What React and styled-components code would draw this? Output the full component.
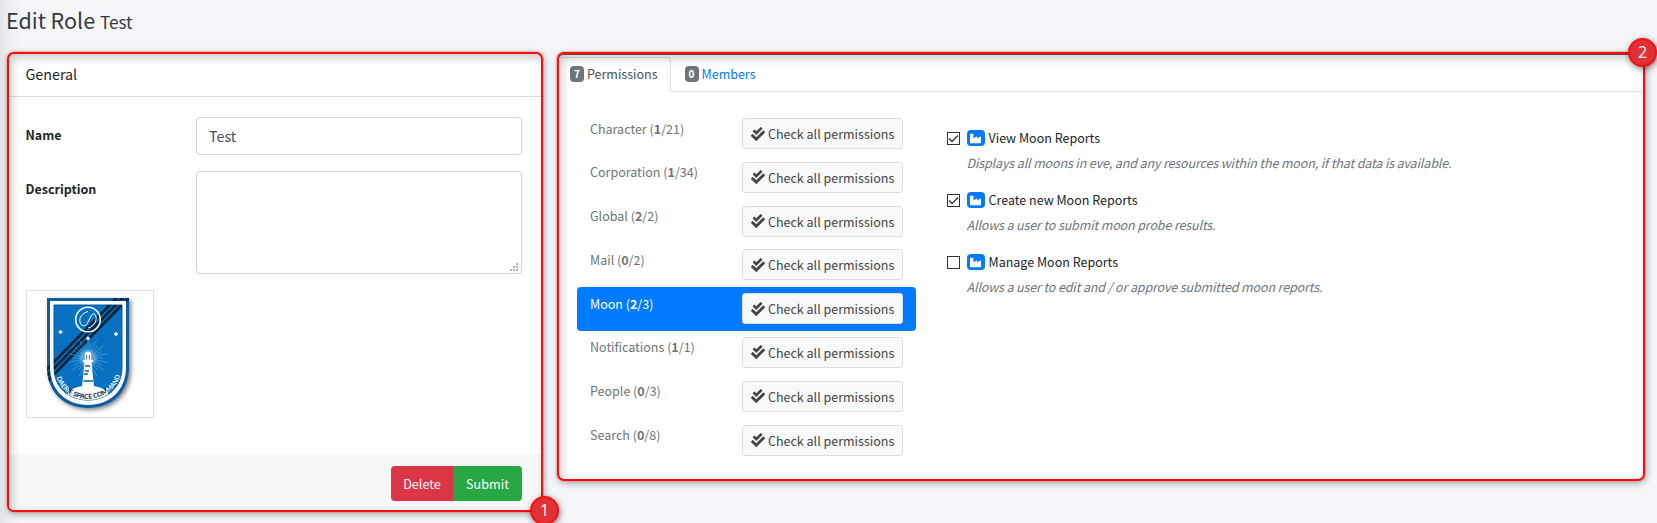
import React from "react";
import styled, { createGlobalStyle, css } from "styled-components";
import { FaCheckDouble, FaIndustry } from "react-icons/fa";

const Global = createGlobalStyle`
  *, *::before, *::after { box-sizing: border-box; }
  body {
    margin: 0;
    background: #f4f6f9;
    color: #212529;
    font-family: "Noto Sans CJK JP", "Open Sans", sans-serif;
    font-size: 12.5px;
    line-height: 20px;
    overflow: hidden;
  }
`;

const Page = styled.main`
  height: 523px;
  padding: 0 12px 0 7px;
  background: linear-gradient(90deg, #e2e4e7 0, #eceef1 8px, #f4f6f9 22px);
`;

const Heading = styled.h1`
  height: 52px;
  margin: 0;
  padding-top: 4px;
  font-size: 21.5px;
  line-height: 32px;
  font-weight: 400;
  color: #343a40;
  white-space: nowrap;
  margin-left: -1px;
`;

const SubHeading = styled.small`
  font-size: 17.2px;
`;

const Columns = styled.div`
  display: flex;
  align-items: flex-start;
  gap: 14px;
`;

const Panel = styled.section`
  position: relative;
  display: flex;
  flex-direction: column;
  width: ${(p) => p.$width}px;
  height: ${(p) => p.$height}px;
  background: #fff;
  border: 2px solid #fb0d0d;
  border-radius: 7px;
  box-shadow: 0 0 0 1px rgba(255, 120, 120, 0.35), 1px 2px 7px rgba(0, 0, 0, 0.35);

  &::after {
    content: "";
    position: absolute;
    inset: 0;
    border-radius: 5px;
    box-shadow: inset 3px 4px 8px rgba(0, 0, 0, 0.2);
    ${(p) => p.$dark && css`border-top: 1px solid #6a4048;`}
    pointer-events: none;
  }
`;

const Marker = styled.span`
  position: absolute;
  z-index: 2;
  right: ${(p) => p.$right}px;
  ${(p) => (p.$top ? css`top: -16px;` : css`bottom: -15px;`)}
  width: 29px;
  height: 29px;
  border: 2px solid #fa0f0f;
  border-radius: 50%;
  background: #e03236;
  box-shadow: 1px 2px 6px rgba(0, 0, 0, 0.5);
  color: #ffe9e9;
  font-family: "Noto Sans", sans-serif;
  font-size: 16px;
  line-height: 25px;
  text-align: center;
`;

const PanelHeader = styled.header`
  height: 43px;
  padding: 9px 17px 0 16.5px;
  border-bottom: 1px solid #dcddde;
  font-size: 14.3px;
  line-height: 22px;
`;

const Form = styled.div`
  flex: 1;
  padding: 20px 19px 0 17px;
`;

const Field = styled.label`
  display: grid;
  grid-template-columns: 170px 1fr;
  margin-bottom: 16px;
`;

const FieldName = styled.span`
  padding-top: 8px;
  margin-left: -0.5px;
  font-weight: 700;
`;

const control = css`
  display: block;
  width: 100%;
  border: 1px solid #ced4da;
  border-radius: 4px;
  background: #fff;
  color: #495057;
  font-family: inherit;
  font-size: 14.3px;
  outline: none;
`;

const Input = styled.input`
  ${control}
  height: 38px;
  padding: 0 12px 2px;
`;

const DescriptionBox = styled.span`
  ${control}
  display: flex;
  align-items: flex-end;
  justify-content: flex-end;
  height: 103px;
  padding: 2px 3px;
`;

const Thumbnail = styled.div`
  width: 128px;
  height: 128px;
  border: 1px solid #dee2e6;
  background: #fff;
`;

const Footer = styled.footer`
  display: flex;
  justify-content: flex-end;
  height: 56px;
  padding: 12px 19px 0;
  background: #f7f7f7;
  border-radius: 0 0 5px 5px;
`;

const ActionButton = styled.button`
  width: ${(p) => p.$width}px;
  height: 35px;
  padding: 0;
  border: 0;
  border-radius: ${(p) => (p.$danger ? "4px 0 0 4px" : "0 4px 4px 0")};
  background: ${(p) => (p.$danger ? "#dc3545" : "#28a745")};
  color: #fff;
  font-family: inherit;
  font-size: 12.6px;
`;

const Tabs = styled.nav`
  display: flex;
  height: 38px;
  border-bottom: 1px solid #dee2e6;
  padding-top: 3px;
`;

const Tab = styled.a`
  display: flex;
  align-items: center;
  gap: 3px;
  height: 35px;
  padding: 0 12px 3px ${(p) => (p.$active ? 11 : 14)}px;
  border: 1px solid transparent;
  border-width: 1px 1px 0 0;
  ${(p) => p.$active && css`border-color: #dee2e6; background: #fff;`}
  border-top-right-radius: 4px;
  color: ${(p) => (p.$active ? "#495057" : "#007bff")};
  white-space: nowrap;
`;

const Count = styled.b`
  width: 14px;
  height: 16px;
  margin-top: 1px;
  border-radius: 4px;
  background: #6c757d;
  color: #fff;
  font-size: 10px;
  line-height: 15px;
  text-align: center;
`;

const TabBody = styled.div`
  display: flex;
  padding: 20px 18px 0;
`;

const Scopes = styled.div`
  width: 339px;
`;

const Scope = styled.div`
  display: flex;
  justify-content: space-between;
  align-items: flex-start;
  height: 43.8px;
  padding: 6px 13px 0;
  border-radius: 4px;
  background: ${(p) => (p.$active ? "#007bff" : "transparent")};
  color: ${(p) => (p.$active ? "#fff" : "#6c757d")};
`;

const ScopeName = styled.span`
  padding-top: 0.5px;
`;

const CheckAll = styled.button`
  display: flex;
  align-items: center;
  gap: 3px;
  width: 161px;
  height: 31px;
  padding: 0 8px;
  border: 1px solid #ddd;
  border-radius: 3px;
  background: #f8f9fa;
  color: #444;
  font-family: inherit;
  font-size: 12.5px;
  white-space: nowrap;

  svg { flex: none; }
`;

const Permissions = styled.div`
  padding: 16px 0 0 31px;
`;

const Permission = styled.div`
  display: grid;
  grid-template-columns: 13px 1fr;
  column-gap: 6.5px;
  height: 62px;
`;

const Checkbox = styled.span`
  width: 13px;
  height: 13px;
  margin-top: 4px;
  border: 1px solid #333;
  background: #fff;

  svg { display: block; }
`;

const PermissionTitle = styled.div`
  display: flex;
  align-items: center;
  gap: 4px;
`;

const TypeBadge = styled.span`
  display: flex;
  align-items: center;
  justify-content: center;
  width: 18px;
  height: 16px;
  border-radius: 4px;
  background: #007bff;
  color: #fff;
`;

const Hint = styled.p`
  margin: 5px 0 0;
  color: #6c757d;
  font-style: italic;
  letter-spacing: -0.13px;
  white-space: nowrap;
`;

const ResizeGrip = () => (
  <svg width="8" height="8" viewBox="0 0 8 8" fill="#b8b8b8" shapeRendering="crispEdges">
    {[[6, 0], [3, 3], [6, 3], [0, 6], [3, 6], [6, 6]].map(([x, y]) => (
      <rect key={`${x}-${y}`} x={x} y={y} width="2" height="2" />
    ))}
  </svg>
);

const rays = Array.from({ length: 28 }, (_, i) => {
  const a = (i / 28) * Math.PI * 2;
  const r = i % 2 ? 20 : 15;
  return `M${61 + 6 * Math.cos(a)} ${67 + 6 * Math.sin(a)}L${61 + r * Math.cos(a)} ${67 + r * Math.sin(a)}`;
}).join("");

const SHIELD = "M20 7H102V76C102 102 84 117 61 117S20 102 20 76Z";
const FIELD = "M27 14H95V76C95 97 80 109 61 109S27 97 27 76Z";
const STRIPES = "M90.5 6L14 84.3M96.5 6L16 88.5M102.5 6L18 92.5";

const Crest = () => (
  <svg width="126" height="126" viewBox="0 0 126 126">
    <defs>
      <clipPath id="shield"><path d={SHIELD} /></clipPath>
      <clipPath id="field"><path d={FIELD} /></clipPath>
      <path id="motto" d="M29 84C36 116 86 116 94 82" />
      <linearGradient id="ink" gradientUnits="userSpaceOnUse" x1="0" y1="0" x2="126" y2="0">
        <stop offset=".335" stopColor="#fff" />
        <stop offset=".335" stopColor="#08233b" />
        <stop offset=".625" stopColor="#08233b" />
        <stop offset=".625" stopColor="#fff" />
      </linearGradient>
      <radialGradient id="glow">
        <stop offset="0" stopColor="#fff" stopOpacity=".75" />
        <stop offset="1" stopColor="#fff" stopOpacity="0" />
      </radialGradient>
      <filter id="drop" x="-10%" y="-10%" width="130%" height="130%">
        <feDropShadow dx="2" dy="2" stdDeviation="2" floodOpacity="0.5" />
      </filter>
    </defs>
    <path filter="url(#drop)" fill="#0a5c9f" d={SHIELD} />
    <path clipPath="url(#shield)" d={STRIPES} stroke="#06243b" strokeWidth="2.8" />
    <path fill="#fff" d="M23 10H99V76C99 100 82 114 61 114S23 100 23 76Z" />
    <path fill="#0671c1" stroke="#0a5c9f" d={FIELD} />
    <g clipPath="url(#field)">
      <path d={STRIPES} stroke="#06243b" strokeWidth="2.8" />
      <path d={rays} stroke="#9fd0f2" strokeWidth=".5" opacity=".75" />
      <circle cx="61" cy="67" r="10" fill="url(#glow)" />
      <ellipse cx="61" cy="106" rx="21" ry="11.5" fill="#fff" />
    </g>
    <g fill="none" stroke="#fff">
      <circle cx="61" cy="28.5" r="12.3" strokeWidth="1.6" />
      <path d="M61 20.5C55 22 52 27 53 31C54 36 59 36 61 31L64 25C67 20 70 25 69 29C68 33 65 36 61 37" strokeWidth="1" />
      <path d="M31.5 41h4M33.5 39v4M87 43h4M89 41v4M59 47.5h4M61 45.5v4" strokeWidth="1.4" />
    </g>
    <path fill="#fff" d="M57.5 71H64.5L67 96H55ZM56 69H66V71H56ZM58 63H64V69H58ZM57 63Q61 58 65 63Z" />
    <path d="M58 75H63M58 80H62M57 83H61M56.5 90H66" stroke="#0a5c9f" strokeWidth="1.5" />
    <path d="M59.6 64V68.5M62.4 64V68.5" stroke="#0a5c9f" strokeWidth=".8" />
    <text fill="url(#ink)" fontFamily="Lato, sans-serif" fontSize="6.6" fontWeight="700" textAnchor="middle">
      <textPath href="#motto" startOffset="50%">DAERIE SPACE COMMAND</textPath>
    </text>
  </svg>
);

const scopes = [
  ["Character", 1, 21], ["Corporation", 1, 34], ["Global", 2, 2], ["Mail", 0, 2],
  ["Moon", 2, 3], ["Notifications", 1, 1], ["People", 0, 3], ["Search", 0, 8],
];

const permissions = [
  ["View Moon Reports", "Displays all moons in eve, and any resources within the moon, if that data is available.", true],
  ["Create new Moon Reports", "Allows a user to submit moon probe results.", true],
  ["Manage Moon Reports", "Allows a user to edit and / or approve submitted moon reports.", false],
];

export default function App() {
  return (
    <Page>
      <Global />
      <Heading>Edit Role <SubHeading>Test</SubHeading></Heading>
      <Columns>
        <Panel $width={536} $height={460}>
          <PanelHeader>General</PanelHeader>
          <Form>
            <Field><FieldName>Name</FieldName><Input defaultValue="Test" /></Field>
            <Field>
              <FieldName>Description</FieldName>
              <DescriptionBox><ResizeGrip /></DescriptionBox>
            </Field>
            <Thumbnail><Crest /></Thumbnail>
          </Form>
          <Footer>
            <ActionButton $danger $width={62}>Delete</ActionButton>
            <ActionButton $width={69}>Submit</ActionButton>
          </Footer>
          <Marker $right={-18}>1</Marker>
        </Panel>
        <Panel $width={1088} $height={429} $dark>
          <Tabs>
            <Tab $active><Count>7</Count>Permissions</Tab>
            <Tab><Count>0</Count>Members</Tab>
          </Tabs>
          <TabBody>
            <Scopes>
              {scopes.map(([name, on, total]) => (
                <Scope key={name} $active={name === "Moon"}>
                  <ScopeName>{name} (<b>{on}</b>/{total})</ScopeName>
                  <CheckAll><FaCheckDouble size={14} />Check all permissions</CheckAll>
                </Scope>
              ))}
            </Scopes>
            <Permissions>
              {permissions.map(([title, hint, on]) => (
                <Permission key={title}>
                  <Checkbox>
                    {on && <svg width="11" height="11" viewBox="0 0 11 11"><path d="M1 5.5L4 8.5L10 2.5" fill="none" stroke="#333" strokeWidth="1.3" /></svg>}
                  </Checkbox>
                  <div>
                    <PermissionTitle><TypeBadge><FaIndustry size={11} /></TypeBadge>{title}</PermissionTitle>
                    <Hint>{hint}</Hint>
                  </div>
                </Permission>
              ))}
            </Permissions>
          </TabBody>
          <Marker $top $right={-14}>2</Marker>
        </Panel>
      </Columns>
    </Page>
  );
}
